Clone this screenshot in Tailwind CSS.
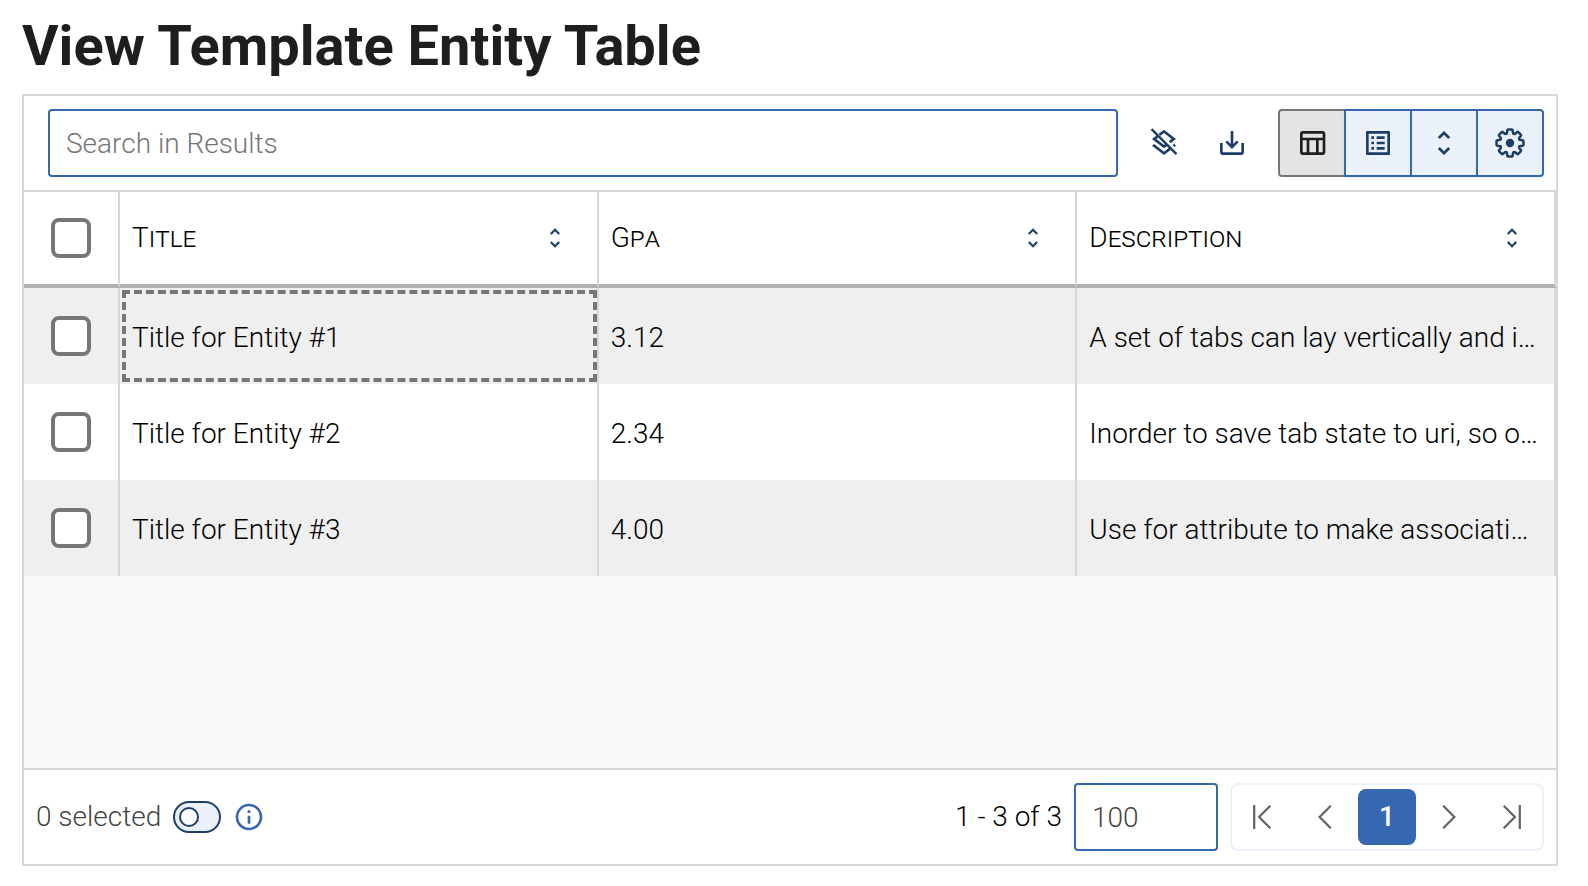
<!DOCTYPE html>
<html lang="en">
<head>
<meta charset="utf-8">
<meta name="viewport" content="width=device-width, initial-scale=1">
<title>View Template Entity Table</title>
<script src="https://cdn.jsdelivr.net/npm/@tailwindcss/browser@4"></script>
</head>
<body class="flex min-h-screen flex-col bg-white px-[22px] pb-5 font-[Roboto,sans-serif] text-[28px] leading-9 font-light text-black sm:pr-[30px]">
  <svg class="hidden" aria-hidden="true">
    <symbol id="unfold" viewBox="0 0 24 24"><path d="M12 5.83 15.17 9l1.41-1.41L12 3 7.41 7.59 8.83 9 12 5.83zm0 12.34L8.83 15l-1.41 1.41L12 21l4.59-4.59L15.17 15 12 18.17z"/></symbol>
  </svg>

  <h1 class="pt-3.5 pb-4 text-[56px] leading-[64px] font-bold text-[#1e1e1e]">View Template Entity Table</h1>

  <main class="flex flex-1 flex-col border-2 border-[#d8d8d8]">
    <div class="flex items-center gap-3 border-b-2 border-[#d8d8d8] py-[13px] pr-3 pl-6">
      <input type="text" aria-label="Search in Results" placeholder="Search in Results" class="h-[68px] min-w-0 flex-1 rounded-sm border-2 border-[#3568b0] px-4 text-[#444] outline-none placeholder:text-[#767676]">
      <div class="flex text-[#1c3d66]">
        <button type="button" aria-label="Clear grouping" class="flex size-[68px] items-center justify-center">
          <svg class="size-8" viewBox="0 0 24 24" fill="currentColor"><path d="M3.27 1 2 2.27 6.22 6.5 3 9l1.63 1.27L12 16l2.1-1.63 1.43 1.43L12 18.54l-7.37-5.73L3 14.07l9 7 4.95-3.85L20.73 21 22 19.73 3.27 1zM7.65 7.92l5.03 5.03-.68.52L6.26 9l1.39-1.08zM12 4.53 17.74 9l-2.21 1.72 1.43 1.43L21 9l-9-7-4.04 3.14 1.43 1.43L12 4.53zM19.81 15 21 14.07l-1.43-1.43-1.19.92L19.81 15z" fill-rule="evenodd"/></svg>
        </button>
        <button type="button" aria-label="Download" class="flex size-[68px] items-center justify-center">
          <svg class="size-8" viewBox="0 0 24 24" fill="currentColor"><path d="M19 12v7H5v-7H3v7c0 1.1.9 2 2 2h14c1.1 0 2-.9 2-2v-7h-2zm-6 .67 2.59-2.58L17 11.5l-5 5-5-5 1.41-1.41L11 12.67V3h2z"/></svg>
        </button>
      </div>
      <div class="flex -space-x-0.5 text-[#1c3d66]">
        <button type="button" aria-label="Table view" aria-pressed="true" class="flex size-[68px] items-center justify-center rounded-l-sm border-2 border-[#767676] bg-[#e4e4e4] text-[#1e1e1e]">
          <svg class="size-8" viewBox="0 0 24 24" fill="currentColor"><path d="M20 3H5c-1.1 0-2 .9-2 2v14c0 1.1.9 2 2 2h15c1.1 0 2-.9 2-2V5c0-1.1-.9-2-2-2zm0 2v3H5V5h15zm-5 14h-5v-9h5v9zM5 10h3v9H5v-9zm12 9v-9h3v9h-3z"/></svg>
        </button>
        <button type="button" aria-label="List view" class="flex size-[68px] items-center justify-center border-2 border-[#3568b0] bg-[#eaf1fb] shadow-md shadow-black/5">
          <svg class="size-8" viewBox="0 0 24 24" fill="currentColor"><path d="M19 5v14H5V5h14m1.1-2H3.9c-.5 0-.9.4-.9.9v16.2c0 .4.4.9.9.9h16.2c.4 0 .9-.5.9-.9V3.9c0-.5-.5-.9-.9-.9zM11 7h6v2h-6V7zm0 4h6v2h-6v-2zm0 4h6v2h-6zM7 7h2v2H7zm0 4h2v2H7zm0 4h2v2H7z"/></svg>
        </button>
        <button type="button" aria-label="Row height" class="flex size-[68px] items-center justify-center border-2 border-[#3568b0] bg-[#eaf1fb] shadow-md shadow-black/5">
          <svg class="size-8" fill="currentColor"><use href="#unfold"/></svg>
        </button>
        <button type="button" aria-label="Settings" class="flex size-[68px] items-center justify-center rounded-r-sm border-2 border-[#3568b0] bg-[#eaf1fb] shadow-md shadow-black/5">
          <svg class="size-8" viewBox="-16 -16 32 32" fill="none" stroke="currentColor" stroke-width="2.5" stroke-linecap="round" stroke-linejoin="round">
            <path id="tooth" d="M-3.8-9.2Q-3-9.6-2.9-10.6L-2.7-12.6Q-2.6-13.5-1.8-13.5H1.8Q2.6-13.5 2.7-12.6L2.9-10.6Q3-9.6 3.8-9.2"/>
            <use href="#tooth" transform="rotate(45)"/><use href="#tooth" transform="rotate(90)"/><use href="#tooth" transform="rotate(135)"/><use href="#tooth" transform="rotate(180)"/><use href="#tooth" transform="rotate(225)"/><use href="#tooth" transform="rotate(270)"/><use href="#tooth" transform="rotate(315)"/>
            <circle r="4.2" fill="currentColor" stroke="none"/>
          </svg>
        </button>
      </div>
    </div>

    <div class="flex-1 bg-[#fafafa]">
      <table class="w-full table-fixed border-separate border-spacing-0 text-left">
        <colgroup><col class="w-24"><col><col><col></colgroup>
        <thead class="bg-white">
          <tr class="h-24">
            <th class="border-r-2 border-b-4 border-r-[#d8d8d8] border-b-[#b1b1b1]"><input type="checkbox" aria-label="Select all rows" class="mx-auto block size-10 appearance-none rounded-lg border-4 border-[#767676] bg-white"></th>
            <th class="border-r-2 border-b-4 border-r-[#d8d8d8] border-b-[#b1b1b1] pr-[29px] pl-3 font-light">
              <div class="flex items-center justify-between"><span class="[font-variant-caps:small-caps]">Title</span><button type="button" aria-label="Sort by title" class="text-[#1c3d66]"><svg class="size-[26px]" fill="currentColor"><use href="#unfold"/></svg></button></div>
            </th>
            <th class="border-r-2 border-b-4 border-r-[#d8d8d8] border-b-[#b1b1b1] pr-[29px] pl-3 font-light">
              <div class="flex items-center justify-between"><span class="[font-variant-caps:small-caps]">Gpa</span><button type="button" aria-label="Sort by GPA" class="text-[#1c3d66]"><svg class="size-[26px]" fill="currentColor"><use href="#unfold"/></svg></button></div>
            </th>
            <th class="border-r-2 border-b-4 border-r-[#d8d8d8] border-b-[#b1b1b1] pr-[29px] pl-3 font-light">
              <div class="flex items-center justify-between"><span class="[font-variant-caps:small-caps]">Description</span><button type="button" aria-label="Sort by description" class="text-[#1c3d66]"><svg class="size-[26px]" fill="currentColor"><use href="#unfold"/></svg></button></div>
            </th>
          </tr>
        </thead>
        <tbody>
          <tr class="h-24 bg-[#efefef]">
            <td class="border-r-2 border-[#d8d8d8]"><input type="checkbox" aria-label="Select entity 1" class="mx-auto block size-10 appearance-none rounded-lg border-4 border-[#767676] bg-white"></td>
            <td class="truncate border-r-2 border-[#d8d8d8] px-3 pt-1 outline-4 -outline-offset-6 outline-[#767676] outline-dashed">Title for Entity #1</td>
            <td class="truncate border-r-2 border-[#d8d8d8] px-3 pt-1">3.12</td>
            <td class="truncate border-r-2 border-[#d8d8d8] px-3 pt-1">A set of tabs can lay vertically and it can save state</td>
          </tr>
          <tr class="h-24 bg-white">
            <td class="border-r-2 border-[#d8d8d8]"><input type="checkbox" aria-label="Select entity 2" class="mx-auto block size-10 appearance-none rounded-lg border-4 border-[#767676] bg-white"></td>
            <td class="truncate border-r-2 border-[#d8d8d8] px-3 pt-1">Title for Entity #2</td>
            <td class="truncate border-r-2 border-[#d8d8d8] px-3 pt-1">2.34</td>
            <td class="truncate border-r-2 border-[#d8d8d8] px-3 pt-1">Inorder to save tab state to uri, so one can share it</td>
          </tr>
          <tr class="h-24 bg-[#efefef]">
            <td class="border-r-2 border-[#d8d8d8]"><input type="checkbox" aria-label="Select entity 3" class="mx-auto block size-10 appearance-none rounded-lg border-4 border-[#767676] bg-white"></td>
            <td class="truncate border-r-2 border-[#d8d8d8] px-3 pt-1">Title for Entity #3</td>
            <td class="truncate border-r-2 border-[#d8d8d8] px-3 pt-1">4.00</td>
            <td class="truncate border-r-2 border-[#d8d8d8] px-3 pt-1">Use for attribute to make association with a tab</td>
          </tr>
        </tbody>
      </table>
    </div>

    <div class="flex items-center justify-between border-t-2 border-[#d8d8d8] px-3 py-[13px]">
      <div class="flex items-center gap-3">
        <label for="show-selected" class="text-[#444]">0 selected</label>
        <input id="show-selected" type="checkbox" role="switch" class="flex h-8 w-12 appearance-none items-center rounded-full border-2 border-[#1c3d66] bg-[#eaf1fb] pl-1 before:size-5 before:rounded-full before:border-2 before:border-[#1c3d66] before:bg-white before:content-['']">
        <button type="button" aria-label="Selection help" class="text-[#3568b0]"><svg class="size-8" viewBox="0 0 24 24" fill="currentColor"><path d="M11 7h2v2h-2zm0 4h2v6h-2zm1-9C6.48 2 2 6.48 2 12s4.48 10 10 10 10-4.48 10-10S17.52 2 12 2zm0 18c-4.41 0-8-3.59-8-8s3.59-8 8-8 8 3.59 8 8-3.59 8-8 8z"/></svg></button>
      </div>
      <div class="flex items-center gap-3">
        <label for="page-size" class="whitespace-nowrap">1 - 3 of 3</label>
        <input id="page-size" type="text" value="100" class="h-[68px] w-36 rounded-sm border-2 border-[#3568b0] px-4 text-[#444] outline-none">
        <nav aria-label="Pagination" class="flex h-[68px] items-center gap-1 rounded-lg border-2 border-[#eaf1fb] px-0.5 text-[#626262]">
          <button type="button" aria-label="First page" class="flex h-14 w-[58px] items-center justify-center"><svg class="size-6" viewBox="0 0 24 24" fill="none" stroke="currentColor" stroke-width="2.2"><path d="M3.2 0v24M19.3.8 8.1 12l11.2 11.2"/></svg></button>
          <button type="button" aria-label="Previous page" class="flex h-14 w-[58px] items-center justify-center"><svg class="size-6" viewBox="0 0 24 24" fill="none" stroke="currentColor" stroke-width="2.2"><path d="M17.8.8 6.6 12l11.2 11.2"/></svg></button>
          <button type="button" aria-current="page" class="h-14 w-[58px] rounded-lg bg-[#3568b0] font-medium text-white">1</button>
          <button type="button" aria-label="Next page" class="flex h-14 w-[58px] items-center justify-center"><svg class="size-6" viewBox="0 0 24 24" fill="none" stroke="currentColor" stroke-width="2.2"><path d="M6.2.8 17.4 12 6.2 23.2"/></svg></button>
          <button type="button" aria-label="Last page" class="flex h-14 w-[58px] items-center justify-center"><svg class="size-6" viewBox="0 0 24 24" fill="none" stroke="currentColor" stroke-width="2.2"><path d="M20.8 0v24M4.7.8 15.9 12 4.7 23.2"/></svg></button>
        </nav>
      </div>
    </div>
  </main>
</body>
</html>
